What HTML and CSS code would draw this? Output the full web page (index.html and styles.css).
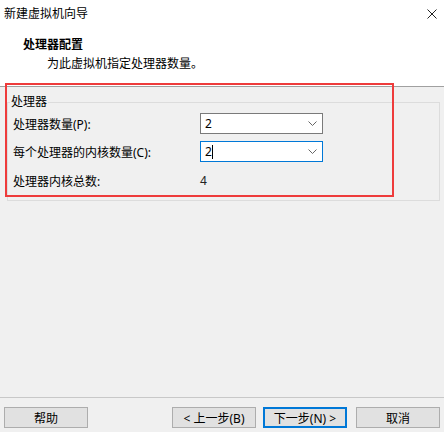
FILE: index.html
```html
<!DOCTYPE html>
<html lang="zh-CN">
<head>
    <meta charset="UTF-8">
    <meta name="viewport" content="width=device-width, initial-scale=1.0">
    <title>新建虚拟机向导</title>
    <link rel="stylesheet" href="styles.css">
</head>
<body>
    <div class="header">
        <div class="titlebar">
            <span class="title">新建虚拟机向导</span>
            <svg class="close" width="10" height="10" viewBox="0 0 10 10">
                <path d="M0.5 0.5 L9.5 9.5 M9.5 0.5 L0.5 9.5" stroke="#222" stroke-width="1" fill="none"/>
            </svg>
        </div>
        <h1>处理器配置</h1>
        <p class="desc">为此虚拟机指定处理器数量。</p>
    </div>

    <div class="main">
        <fieldset class="group">
            <legend>处理器</legend>
            <div class="row">
                <label>处理器数量(P):</label>
                <div class="combo">
                    <span>2</span>
                    <svg class="chevron" width="9" height="5" viewBox="0 0 9 5">
                        <path d="M0.5 0.5 L4.5 4.5 L8.5 0.5" stroke="#666" stroke-width="1" fill="none"/>
                    </svg>
                </div>
            </div>
            <div class="row">
                <label>每个处理器的内核数量(C):</label>
                <div class="combo focused">
                    <span>2</span><span class="caret"></span>
                    <svg class="chevron" width="9" height="5" viewBox="0 0 9 5">
                        <path d="M0.5 0.5 L4.5 4.5 L8.5 0.5" stroke="#666" stroke-width="1" fill="none"/>
                    </svg>
                </div>
            </div>
            <div class="row total">
                <label>处理器内核总数:</label>
                <span class="value">4</span>
            </div>
        </fieldset>
    </div>

    <div class="footer">
        <button class="btn">帮助</button>
        <button class="btn btn-back">&lt; 上一步(B)</button>
        <button class="btn btn-default">下一步(N) &gt;</button>
        <button class="btn btn-cancel">取消</button>
    </div>

    <div class="highlight"></div>
</body>
</html>
```

FILE: styles.css
```css
html, body {
    margin: 0;
    padding: 0;
}

body {
    font-family: "Noto Sans", "Noto Sans CJK SC", sans-serif;
    font-size: 12px;
    color: #000;
    background-color: #f0f0f0;
    width: 444px;
    height: 432px;
    display: flex;
    flex-direction: column;
    position: relative;
    overflow: hidden;
}

.header {
    background-color: #fff;
    height: 86px;
    border-bottom: 1px solid #a0a0a0;
    flex-shrink: 0;
}

.titlebar {
    height: 27px;
    display: flex;
    align-items: center;
    justify-content: space-between;
    padding: 0 7px 0 4px;
}

.title {
    line-height: 27px;
}

h1 {
    font-size: 12px;
    font-weight: bold;
    line-height: 16px;
    margin: 10px 0 0 23px;
}

.desc {
    line-height: 16px;
    margin: 3px 0 0 47px;
}

.main {
    flex: 1;
}

.group {
    margin: 7px 4px 0 7px;
    padding: 3px 5px 9px 5px;
    border: 1px solid #dcdcdc;
}

.group legend {
    padding: 0 1px;
    margin-left: -3px;
    line-height: 16px;
}

.row {
    display: flex;
    align-items: center;
    height: 21px;
    margin-bottom: 7px;
}

.row.total {
    margin-top: 8px;
    margin-bottom: 0;
}

.row label {
    width: 187px;
}

.combo {
    height: 19px;
    width: 117px;
    background-color: #fff;
    border: 1px solid #7a7a7a;
    display: flex;
    align-items: center;
    padding-left: 4px;
}

.combo.focused {
    border-color: #0078d7;
}

.caret {
    width: 1px;
    height: 14px;
    background-color: #000;
}

.chevron {
    margin-left: auto;
    margin-right: 5px;
}

.value {
    color: #222;
}

.footer {
    height: 35px;
    border-top: 1px solid #c8c8c8;
    box-sizing: border-box;
    padding: 9px 4px 4px 4px;
    display: flex;
    flex-shrink: 0;
}

.btn {
    width: 84px;
    height: 21px;
    background-color: #e1e1e1;
    border: 1px solid #adadad;
    font-family: "Noto Sans", "Noto Sans CJK SC", sans-serif;
    font-size: 12px;
    color: #000;
    padding: 0;
    margin: 0;
}

.btn-back {
    margin-left: auto;
}

.btn-default {
    margin-left: 7px;
    border: 2px solid #0078d7;
}

.btn-cancel {
    margin-left: 9px;
}

.highlight {
    position: absolute;
    left: 5px;
    top: 83px;
    width: 385px;
    height: 110px;
    border: 2px solid #ee3b3b;
}
```
